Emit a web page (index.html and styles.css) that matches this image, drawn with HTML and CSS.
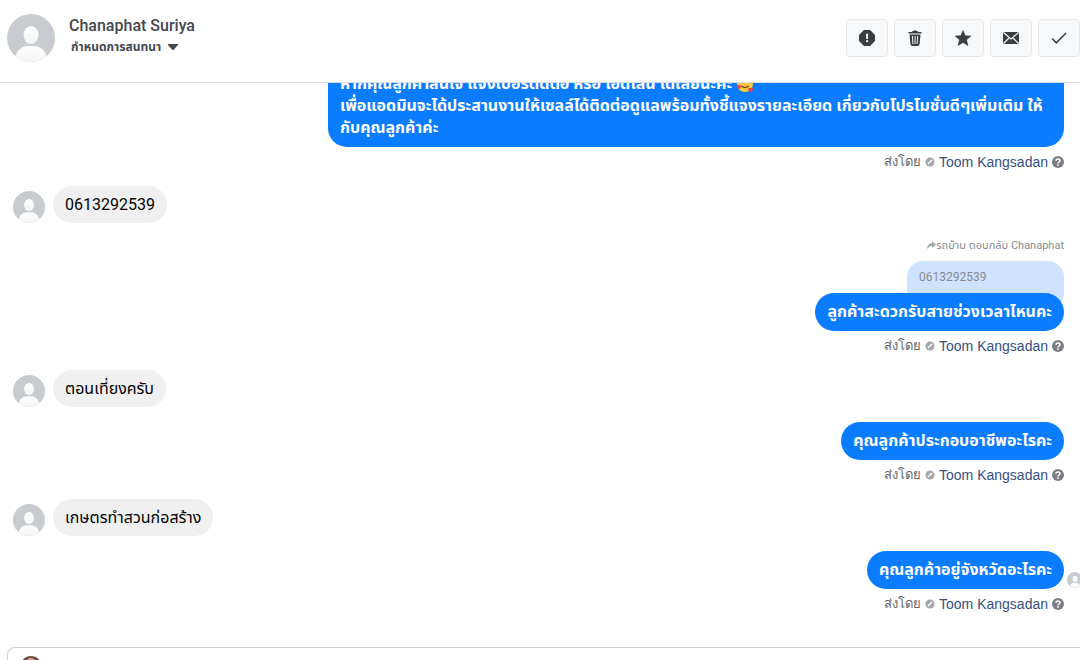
FILE: index.html
```html
<!DOCTYPE html>
<html lang="th">
<head>
  <meta charset="UTF-8">
  <meta name="viewport" content="width=device-width, initial-scale=1.0">
  <title>Chanaphat Suriya</title>
  <link rel="stylesheet" href="styles.css">
</head>
<body>
  <!-- Shared icons -->
  <svg class="sprite" aria-hidden="true">
    <defs>
      <linearGradient id="fade" x1="0" y1="0" x2="0" y2="1">
        <stop offset="0" stop-color="#fff"/>
        <stop offset="1" stop-color="#f3f4f6"/>
      </linearGradient>
      <clipPath id="round"><circle cx="24" cy="24" r="24"/></clipPath>
    </defs>
    <symbol id="person" viewBox="0 0 48 48">
      <g clip-path="url(#round)">
        <rect width="48" height="48" fill="#c8cbd0"/>
        <ellipse cx="24" cy="21" rx="7.5" ry="9"/>
        <path d="M7 48c1-10 7-16 14-16h6c7 0 13 6 14 16z"/>
      </g>
    </symbol>
    <symbol id="source" viewBox="0 0 10 10">
      <circle cx="5" cy="5" r="4.5" fill="#a3a6aa"/>
      <path d="M3 7l4-4" stroke="#fff" stroke-width="1.5"/>
    </symbol>
    <symbol id="help" viewBox="0 0 12 12">
      <circle cx="6" cy="6" r="6" fill="#7b7e84"/>
      <path d="M4 4.7C4 2.3 8 2.3 8 4.6 8 6 6 6 6 7.4" fill="none" stroke="#fff" stroke-width="1.5"/>
      <rect x="5.2" y="8.2" width="1.6" height="1.6" fill="#fff"/>
    </symbol>
  </svg>

  <header class="topbar">
    <svg class="avatar avatar-lg"><use href="#person"/></svg>
    <div class="contact">
      <h1 class="contact-name">Chanaphat Suriya</h1>
      <button class="assign" type="button">
        <span class="assign-text">กำหนดการสนทนา</span>
        <svg class="caret" viewBox="0 0 10 6"><path d="M0 0h10v1L5.500 6h-1L0 1z"/></svg>
      </button>
    </div>
    <div class="actions">
      <button class="action" type="button" aria-label="Spam">
        <svg viewBox="0 0 16 16"><path d="M4.900 0h6.200L16 4.900v6.200L11.100 16H4.900L0 11.100V4.900z" stroke-linejoin="round"/><path d="M7 3.800h2.200L8.900 9H7.300zM7.100 10.300h2V12h-2z" fill="#fff"/></svg>
      </button>
      <button class="action" type="button" aria-label="Delete">
        <svg viewBox="0 0 16 16"><path d="M5 2c.5-2 5.500-2 6 0h3.500v1.500h-13V2zM2.500 4.500h11L12.600 14q-.2 2-2 2H5.400q-1.800 0-2-2z"/><path d="M5.400 6l.5 8M8 6v8M10.600 6l-.5 8" fill="none" stroke="#f7f8fa" stroke-width="1"/></svg>
      </button>
      <button class="action" type="button" aria-label="Follow up">
        <svg viewBox="0 0 16 16"><path d="M8 .5l2.200 5.200 5.600.4-4.300 3.700 1.400 5.700L8 12.400l-4.900 3.100 1.400-5.700L.2 6.100l5.600-.4z" stroke="#3b3d41" stroke-width=".6" stroke-linejoin="round"/></svg>
      </button>
      <button class="action" type="button" aria-label="Mark as unread">
        <svg viewBox="0 0 16 16"><rect y="2" width="16" height="12" rx="1"/><path d="M.5 2.500L8 9l7.500-6.500M.5 13.500L6 8M15.500 13.500L10 8" fill="none" stroke="#f7f8fa" stroke-width="1.200"/></svg>
      </button>
      <button class="action" type="button" aria-label="Done">
        <svg viewBox="0 0 16 16"><path d="M1.200 8.500l4.100 4.300L15 3" fill="none" stroke="#3b3d41" stroke-width="1.500"/></svg>
      </button>
    </div>
  </header>

  <main class="thread">
    <section class="sent">
      <p class="bubble bubble-long">หากคุณลูกค้าสนใจ แจ้งเบอร์ติดต่อ หรือ ไอดีไลน์ ได้เลยนะคะ
        <svg class="emoji" viewBox="0 0 18 18" role="img" aria-label="🥰"><circle cx="9" cy="9" r="8" fill="#fcc440"/><path d="M4.500 7.500q1.500-2 3 0M10.500 7.500q1.500-2 3 0M5.500 11q3.500 3 7 0" fill="none" stroke="#6b3b18" stroke-width="1.200"/><g fill="#ee3e50"><path d="M3 5C-.5 2.500 2-.5 3.500 1.500 5.500-.3 7 2.500 3 5zM3 14c-4-2-2-5 0-3.500 2-1 3 2 0 3.500zM14.500 17c-4-2.500-1.500-5.500.5-3.500 2.500-1.500 3.500 1.500-.5 3.500z"/></g></svg><br>
        เพื่อแอดมินจะได้ประสานงานให้เซลล์ได้ติดต่อดูแลพร้อมทั้งชี้แจงรายละเอียด เกี่ยวกับโปรโมชั่นดีๆเพิ่มเติม ให้<br>
        กับคุณลูกค้าค่ะ</p>
      <div class="sent-by"><span class="sent-label">ส่งโดย</span> <svg class="source"><use href="#source"/></svg> <a href="#">Toom Kangsadan</a> <svg class="help"><use href="#help"/></svg></div>
    </section>

    <section class="received">
      <svg class="avatar avatar-md"><use href="#person"/></svg>
      <p class="bubble">0613292539</p>
    </section>

    <section class="sent">
      <div class="reply-note"><svg class="reply-icon" viewBox="0 0 9 8"><path d="M5 0l4 3.500L5 7V5Q2 5 0 8 .5 2.500 5 2z"/></svg>รถบ้าน ตอบกลับ Chanaphat</div>
      <p class="quote">0613292539</p>
      <p class="bubble">ลูกค้าสะดวกรับสายช่วงเวลาไหนคะ</p>
      <div class="sent-by"><span class="sent-label">ส่งโดย</span> <svg class="source"><use href="#source"/></svg> <a href="#">Toom Kangsadan</a> <svg class="help"><use href="#help"/></svg></div>
    </section>

    <section class="received">
      <svg class="avatar avatar-md"><use href="#person"/></svg>
      <p class="bubble">ตอนเที่ยงครับ</p>
    </section>

    <section class="sent">
      <p class="bubble">คุณลูกค้าประกอบอาชีพอะไรคะ</p>
      <div class="sent-by"><span class="sent-label">ส่งโดย</span> <svg class="source"><use href="#source"/></svg> <a href="#">Toom Kangsadan</a> <svg class="help"><use href="#help"/></svg></div>
    </section>

    <section class="received">
      <svg class="avatar avatar-md"><use href="#person"/></svg>
      <p class="bubble">เกษตรทำสวนก่อสร้าง</p>
    </section>

    <section class="sent">
      <p class="bubble">คุณลูกค้าอยู่จังหวัดอะไรคะ</p>
      <svg class="avatar seen"><use href="#person"/></svg>
      <div class="sent-by"><span class="sent-label">ส่งโดย</span> <svg class="source"><use href="#source"/></svg> <a href="#">Toom Kangsadan</a> <svg class="help"><use href="#help"/></svg></div>
    </section>
  </main>

  <footer class="composer">
    <svg class="composer-photo" viewBox="0 0 24 24"><circle cx="12" cy="12" r="12" fill="#6b5048"/><ellipse cx="12" cy="10" rx="6" ry="8" fill="#d99a80"/></svg>
  </footer>
</body>
</html>
```

FILE: styles.css
```css
* {
  box-sizing: border-box;
}

body {
  display: flex;
  flex-direction: column;
  height: 100vh;
  margin: 0;
  overflow: hidden;
  background: #fff;
  color: #1c1e21;
  font-family: Roboto, "Noto Sans Thai", "Noto Sans", sans-serif;
}

h1, p {
  margin: 0;
}

button {
  padding: 0;
  font-family: inherit;
  cursor: pointer;
}

.sprite {
  position: absolute;
  width: 0;
  height: 0;
}

/* Header */
.topbar {
  display: flex;
  flex-shrink: 0;
  align-items: flex-start;
  padding: 14px 0 20px 7px;
  border-bottom: 1px solid #dadde1;
}

.avatar {
  flex-shrink: 0;
  fill: url(#fade);
}

.avatar-lg {
  width: 48px;
  height: 48px;
}

.avatar-md {
  width: 32px;
  height: 32px;
}

.contact {
  flex: 1;
  padding-left: 14px;
}

.contact-name {
  color: #444950;
  font-size: 16px;
  font-weight: 500;
  line-height: 24px;
}

.assign {
  display: flex;
  align-items: center;
  gap: 7px;
  padding-left: 2px;
  border: 0;
  background: none;
  color: #444950;
}

.assign-text {
  font-size: 12px;
  font-weight: 700;
  line-height: 18px;
}

.caret {
  width: 10px;
  height: 6px;
  fill: #444950;
}

.actions {
  display: flex;
  gap: 6px;
  padding-top: 5px;
}

.action {
  display: flex;
  align-items: center;
  justify-content: center;
  width: 42px;
  height: 38px;
  border: 1px solid #e4e6eb;
  border-radius: 4px;
  background: #f7f8fa;
}

.action svg {
  width: 16px;
  height: 16px;
  fill: #3b3d41;
}

/* Messages */
.thread {
  display: flex;
  flex: 1;
  flex-direction: column;
  justify-content: flex-end;
  min-height: 0;
  padding-bottom: 33px;
  overflow: hidden;
}

.sent {
  display: flex;
  position: relative;
  flex-direction: column;
  flex-shrink: 0;
  align-items: flex-end;
  padding-right: 16px;
}

.received {
  display: flex;
  flex-shrink: 0;
  align-items: flex-start;
  gap: 8px;
  padding: 14px 0 15px 13px;
}

.received .avatar {
  margin-top: 5px;
}

.bubble {
  padding: 8px 12px 7px;
  border-radius: 19px;
  background: #f0f0f0;
  color: #050505;
  font-size: 16px;
  line-height: 22px;
}

.sent .bubble {
  z-index: 1;
  padding-bottom: 8px;
  background: #0a7cff;
  color: #fff;
  font-weight: 700;
}

.sent .bubble-long {
  width: 736px;
  max-width: 90%;
}

.emoji {
  width: 18px;
  height: 18px;
  vertical-align: -4px;
}

.sent-by {
  display: flex;
  align-items: center;
  gap: 4px;
  height: 25px;
  padding-top: 4px;
  color: #65676b;
  font-family: "Liberation Sans", Arial, sans-serif;
  font-size: 14px;
  line-height: 20px;
}

.sent-label {
  font-size: 13px;
}

.sent-by a {
  color: #385080;
  text-decoration: none;
}

.source {
  width: 10px;
  height: 10px;
}

.help {
  width: 12px;
  height: 12px;
}

.reply-note {
  padding-bottom: 7px;
  color: #8a8d91;
  font-size: 11px;
  line-height: 16px;
}

.reply-icon {
  width: 9px;
  height: 8px;
  fill: #a5a8ac;
}

.quote {
  width: 157px;
  margin-bottom: -16px;
  padding: 8px 12px 24px;
  border-radius: 16px;
  background: #cfe3ff;
  color: #85898f;
  font-size: 12px;
  line-height: 16px;
}

.seen {
  position: absolute;
  top: 21px;
  right: -3px;
  width: 16px;
  height: 16px;
}

/* Composer */
.composer {
  flex-shrink: 0;
  height: 13px;
  margin-left: 7px;
  padding: 8px 0 0 12px;
  overflow: hidden;
  border: solid #ccd0d5;
  border-width: 1px 0 0 1px;
  border-radius: 8px 0 0 0;
}

.composer-photo {
  width: 22px;
  height: 22px;
}
```
